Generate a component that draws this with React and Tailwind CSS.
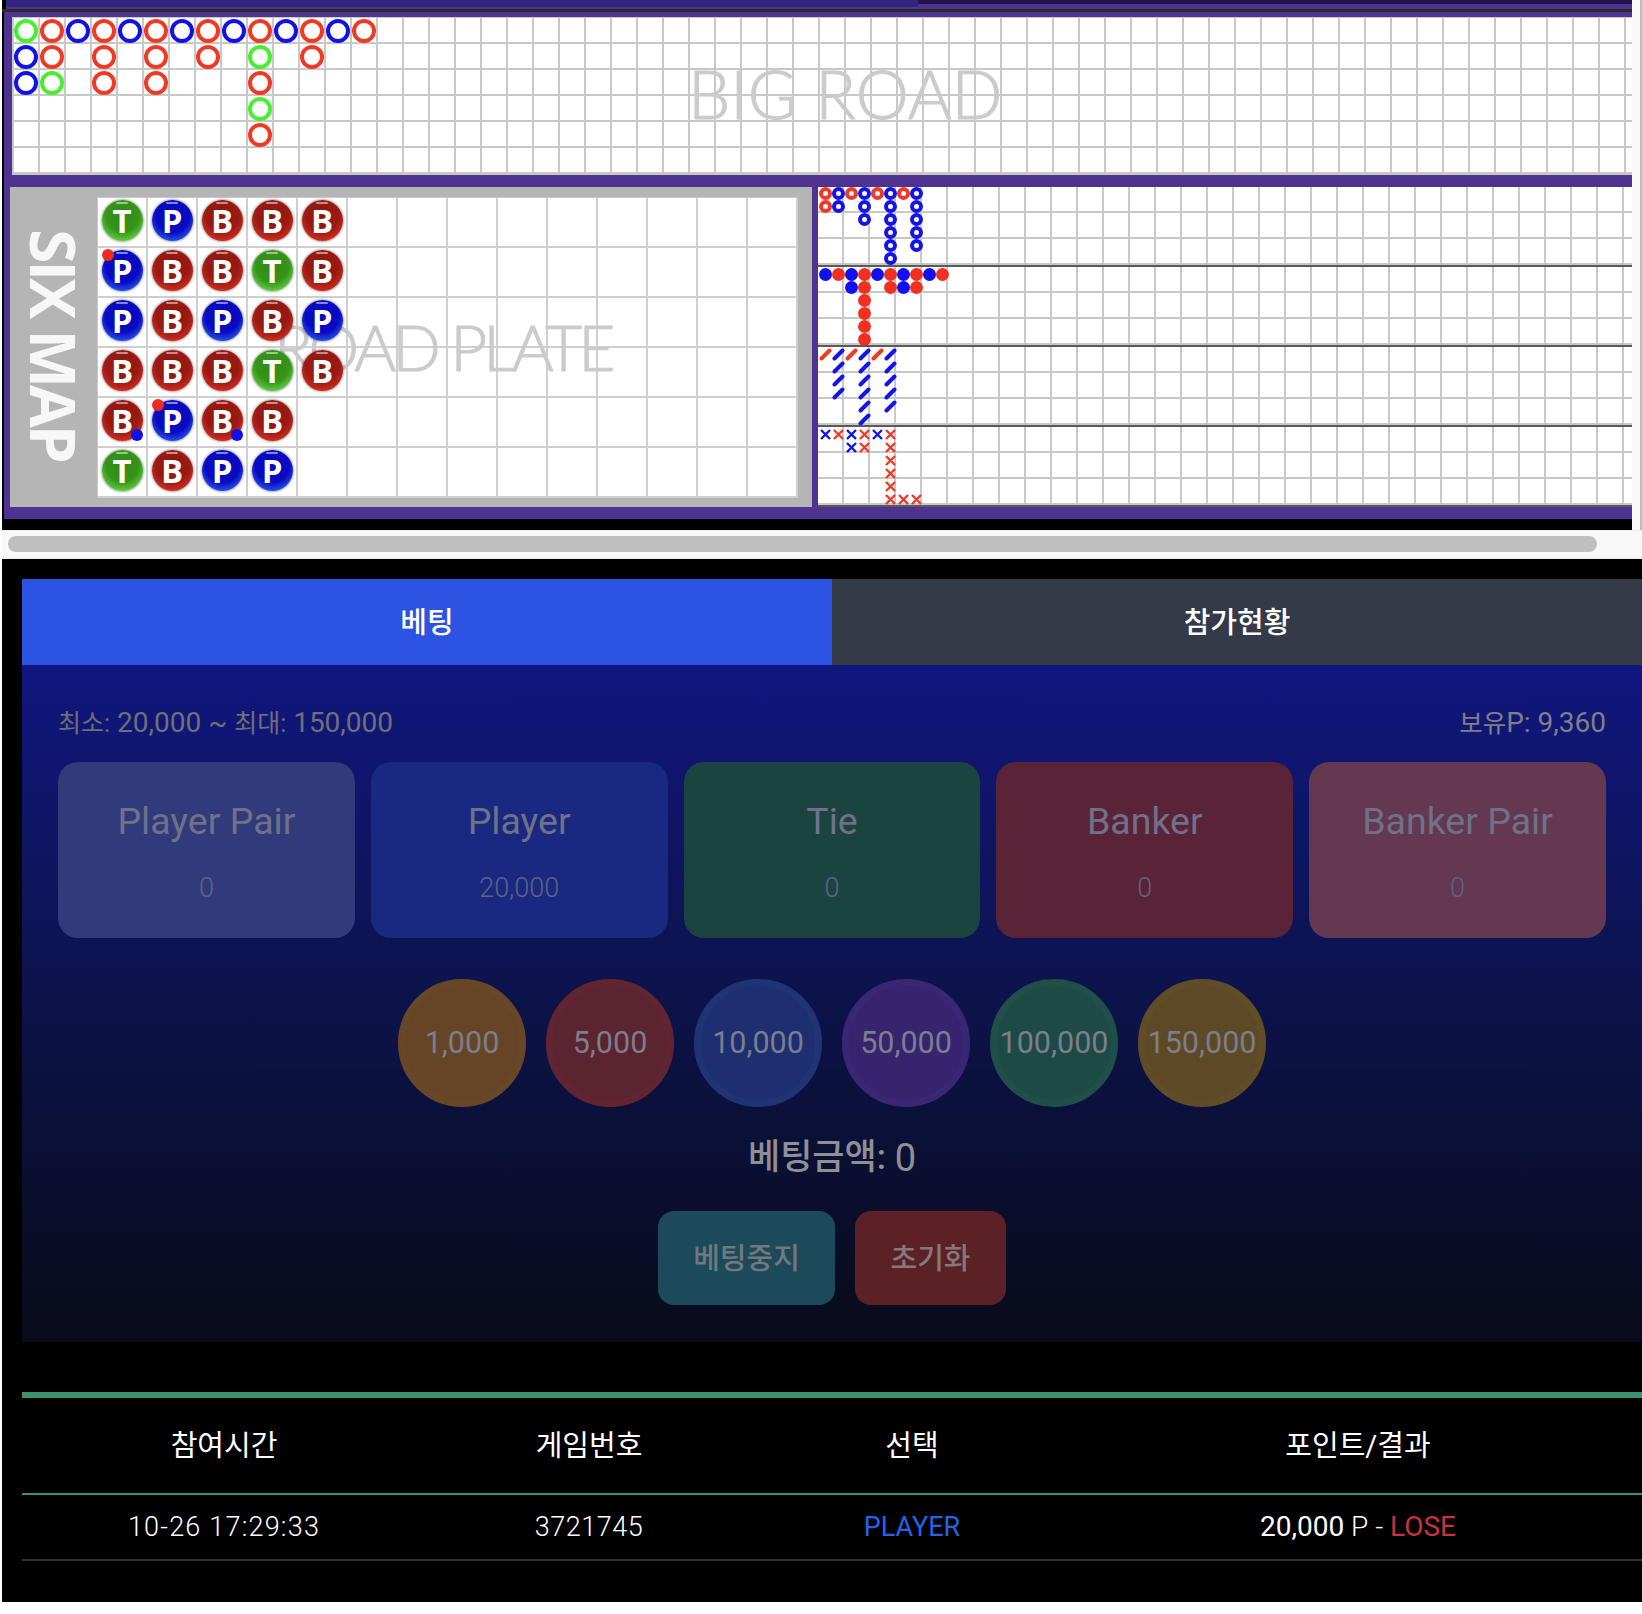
import React from "react";

const bigRoad = [
  ["g", "b", "b"],
  ["r", "r", "g"],
  ["b"],
  ["r", "r", "r"],
  ["b"],
  ["r", "r", "r"],
  ["b"],
  ["r", "r"],
  ["b"],
  ["r", "g", "r", "g", "r"],
  ["b"],
  ["r", "r"],
  ["b"],
  ["r"],
];

const beads = [
  ["T", "Pr", "P", "B", "Bb", "T"],
  ["P", "B", "B", "B", "Pr", "B"],
  ["B", "B", "P", "B", "Bb", "P"],
  ["B", "T", "B", "T", "B", "P"],
  ["B", "B", "P", "B"],
];

const bigEye = ["rr", "bb", "r", "bbb", "r", "bbbbbb", "r", "bbbbb"];
const smallRoad = ["b", "r", "bb", "rrrrrr", "b", "rr", "bb", "rr", "b", "r"];
const cockroach = ["r", "bbbb", "r", "bbbbbb", "r", "bbbbb"];
const extraRoad = ["b", "r", "bb", "rr", "b", "rrrrrr", "_____r", "_____r"];

const ringColor = {
  r: "border-[#ef3b26]",
  b: "border-[#1212e6]",
  g: "border-[#48ef30]",
};

const beadStyle = {
  P: "bg-[radial-gradient(circle_at_50%_38%,#0808b4_0%,#0a0ac4_52%,#2f6cf0_88%,#1a3cc8_100%)]",
  B: "bg-[radial-gradient(circle_at_50%_38%,#8a1610_0%,#9a1a14_50%,#e03422_88%,#a02018_100%)]",
  T: "bg-[radial-gradient(circle_at_50%_38%,#2f8a18_0%,#369418_50%,#6cde4c_88%,#3a9a22_100%)]",
};

function Bead({ code }) {
  const letter = code[0];
  return (
    <div className={`relative w-[41px] h-[41px] rounded-full flex items-center justify-center shadow-[0_0_3px_rgba(0,0,0,0.65)] ${beadStyle[letter]}`}>
      <div className="absolute top-[2px] w-[12px] h-[2px] rounded-full bg-white/50" />
      <span className="font-['Open_Sans',sans-serif] font-bold text-[33px] leading-none text-white">{letter}</span>
      {code[1] === "r" && <div className="absolute left-0 top-[-1px] w-[12px] h-[12px] rounded-full bg-[#f02a1e]" />}
      {code[1] === "b" && <div className="absolute right-0 bottom-[0px] w-[12px] h-[12px] rounded-full bg-[#1010ea]" />}
    </div>
  );
}

function Mark({ kind, color }) {
  const hex = color === "r" ? "#f03a25" : "#1414e6";
  if (kind === "ring") {
    return <div className={`w-[13px] h-[13px] rounded-full border-[4.5px] ${color === "r" ? "border-[#f03a25]" : "border-[#1414e6]"}`} />;
  }
  if (kind === "dot") {
    return <div className={`w-[13px] h-[13px] rounded-full ${color === "r" ? "bg-[#f03020]" : "bg-[#1010f0]"}`} />;
  }
  if (kind === "slash") {
    return (
      <svg width="13" height="13" viewBox="0 0 13 13">
        <path d="M2.5 10.5 L10.5 2.5" stroke={hex} strokeWidth="4" strokeLinecap="round" />
      </svg>
    );
  }
  return (
    <svg width="13" height="13" viewBox="0 0 13 13">
      <path d="M2 2 L11 11 M11 2 L2 11" stroke={hex} strokeWidth="2.4" />
    </svg>
  );
}

function SmallRoad({ data, kind }) {
  return (
    <div className="relative h-[80px] border-b-2 border-[#5a5a5a] bg-white overflow-hidden">
      <div className="grid grid-cols-[repeat(32,26px)] grid-rows-[repeat(3,26px)]">
        {Array.from({ length: 96 }).map((_, i) => (
          <div key={i} className="border-r-2 border-b-2 border-[#c8c8c8]" />
        ))}
      </div>
      <div className={`absolute left-[1px] flex ${kind === "ring" ? "top-0" : "top-[1px]"}`}>
        {data.map((col, c) => (
          <div key={c} className="flex flex-col w-[13px]">
            {col.split("").map((m, r) => (
              <div key={r} className="w-[13px] h-[13px] flex items-center justify-center">
                {m !== "_" && <Mark kind={kind} color={m} />}
              </div>
            ))}
          </div>
        ))}
      </div>
    </div>
  );
}

function BetBox({ title, amount, bg }) {
  return (
    <div className={`h-[176px] rounded-[20px] flex flex-col items-center pt-[36px] ${bg}`}>
      <div className="text-[37.5px] leading-[46px] text-[#6f7189]">{title}</div>
      <div className="mt-[24px] text-[27px] leading-[40px] font-light text-[#5e6283]">{amount}</div>
    </div>
  );
}

const boxes = [
  { title: "Player Pair", amount: "0", bg: "bg-[#313b7c]" },
  { title: "Player", amount: "20,000", bg: "bg-[#192981]" },
  { title: "Tie", amount: "0", bg: "bg-[#1b4441]" },
  { title: "Banker", amount: "0", bg: "bg-[#5b2338]" },
  { title: "Banker Pair", amount: "0", bg: "bg-[#633850]" },
];

const chips = [
  { label: "1,000", bg: "bg-[#654526]", ring: "border-[#684728]" },
  { label: "5,000", bg: "bg-[#5c2330]", ring: "border-[#612532]" },
  { label: "10,000", bg: "bg-[#1d2f70]", ring: "border-[#203375]" },
  { label: "50,000", bg: "bg-[#36246f]", ring: "border-[#392674]" },
  { label: "100,000", bg: "bg-[#1e4a46]", ring: "border-[#204e49]" },
  { label: "150,000", bg: "bg-[#5e4927]", ring: "border-[#614c28]" },
];

export default function App() {
  return (
    <div className="w-full h-[1614px] bg-white overflow-hidden pl-[2px] flex flex-col font-['Roboto','Noto_Sans_CJK_KR',sans-serif]">
      <div className="flex h-[530px] shrink-0">
        <div className="w-[1630px] bg-black flex flex-col">
          {/* top strip */}
          <div className="flex h-[9px] pl-[4px]">
            <div className="w-[912px] bg-[#35247f] border-b-2 border-[#4e3391]" />
            <div className="flex-1 bg-[#1f1450] border-b-[5px] border-[#4e3391]" />
          </div>
          <div className="h-[3px] bg-[#2a2a2a]" />

          <div className="h-[507px] ml-[2px] pl-[6px] pt-[5px] bg-[#4e3391]">
            {/* big road */}
            <div className="relative ml-[2px] h-[158px] overflow-hidden border-l-2 border-t border-b border-[#c8c8c8] bg-white">
              <div className="grid grid-cols-[repeat(63,26px)] grid-rows-[repeat(6,26px)] grid-flow-col">
                {Array.from({ length: 378 }).map((_, i) => {
                  const col = Math.floor(i / 6);
                  const value = bigRoad[col] && bigRoad[col][i % 6];
                  return (
                    <div key={i} className="border-r-2 border-b-2 border-[#c8c8c8] flex items-center justify-center">
                      {value && <div className={`w-[24px] h-[24px] translate-y-[1px] rounded-full border-[4px] ${ringColor[value]}`} />}
                    </div>
                  );
                })}
              </div>
              <div className="absolute left-[674px] top-[37px] font-['Lato',sans-serif] font-light text-[67px] leading-[76px] text-[#cbcbcb] [-webkit-text-stroke:1px_#cbcbcb] whitespace-nowrap">
                BIG ROAD
              </div>
            </div>

            <div className="flex mt-[12px] h-[320px]">
              {/* bead plate */}
              <div className="w-[802px] bg-[#b5b5b6] flex">
                <div className="w-[87px] h-[320px] flex items-center justify-center pb-[4px]">
                  <div className="rotate-90 font-['Open_Sans',sans-serif] font-bold text-[62px] tracking-[-3px] leading-none text-[#f7f7f7] whitespace-nowrap">
                    SIX MAP
                  </div>
                </div>
                <div className="relative mt-[10px] w-[701px] h-[300px] bg-white border-l border-t border-[#c8c8c8] grid grid-cols-[repeat(14,50px)] grid-rows-[repeat(6,50px)] grid-flow-col">
                  {Array.from({ length: 84 }).map((_, i) => (
                    <div key={i} className="border-r-2 border-b-2 border-[#cfcfcf]" />
                  ))}
                  <div className="absolute left-[176px] top-[111px] font-['Lato',sans-serif] font-light text-[64px] tracking-[-4px] leading-[76px] text-[#cbcbcb] [-webkit-text-stroke:1px_#cbcbcb] whitespace-nowrap">
                    ROAD PLATE
                  </div>
                  <div className="absolute left-[-1px] top-[-3px] flex">
                    {beads.map((col, c) => (
                      <div key={c} className="flex flex-col w-[50px]">
                        {col.map((code, r) => (
                          <div key={r} className="w-[50px] h-[50px] flex items-center justify-center">
                            <Bead code={code} />
                          </div>
                        ))}
                      </div>
                    ))}
                  </div>
                </div>
              </div>
              {/* derived roads */}
              <div className="ml-[6px] w-[814px] h-[320px] overflow-hidden">
                <SmallRoad data={bigEye} kind="ring" />
                <SmallRoad data={smallRoad} kind="dot" />
                <SmallRoad data={cockroach} kind="slash" />
                <SmallRoad data={extraRoad} kind="x" />
              </div>
            </div>
          </div>
        </div>
        <div className="flex-1 bg-[#f8f8f8] flex justify-end">
          <div className="w-[2px] bg-[#bdbdbd]" />
        </div>
      </div>

      {/* horizontal scrollbar */}
      <div className="h-[29px] shrink-0 bg-[#f8f8f8] border-t border-b-2 border-[#efefef] flex items-center pl-[6px]">
        <div className="w-[1589px] h-[16px] rounded-full bg-[#bfbfbf]" />
      </div>

      <div className="h-[1043px] shrink-0 bg-black pl-[20px] pt-[20px] overflow-hidden">
        {/* tabs */}
        <div className="flex h-[86px] text-[29px] font-medium text-white">
          <div className="w-[810px] pt-[4px] bg-[#2c53e2] flex items-center justify-center">베팅</div>
          <div className="w-[810px] pt-[4px] bg-[#343a48] flex items-center justify-center">참가현황</div>
        </div>

        {/* bet panel */}
        <div className="w-[1620px] h-[677px] bg-gradient-to-b from-[#11167f] to-[#090a1a] px-[36px] pt-[38px]">
          <div className="flex justify-between h-[39px] pt-[1px] items-center text-[28px] text-[#6f6f78]">
            <span>
              <span className="text-[25px]">최소:</span> 20,000 ~ <span className="text-[25px]">최대:</span> 150,000
            </span>
            <span className="text-[#7f7f85]">
              <span className="text-[25.5px]">보유</span>P: 9,360
            </span>
          </div>

          <div className="grid grid-cols-5 gap-[16px] mt-[20px]">
            {boxes.map((b) => (
              <BetBox key={b.title} {...b} />
            ))}
          </div>

          <div className="flex justify-center gap-[20px] mt-[41px]">
            {chips.map((c) => (
              <div
                key={c.label}
                className={`w-[128px] h-[128px] rounded-full border-[7px] pb-[1px] flex items-center justify-center text-[30.5px] text-[#7b7e8c] ${c.bg} ${c.ring}`}
              >
                {c.label}
              </div>
            ))}
          </div>

          <div className="mt-[27px] h-[45px] pt-[4px] flex items-center justify-center text-[35px] font-medium text-[#8f8f96] whitespace-pre">
            베팅금액: <span className="font-normal text-[38px]">0</span>
          </div>

          <div className="flex justify-center gap-[20px] mt-[32px]">
            <div className="w-[177px] h-[94px] pt-[4px] rounded-[16px] bg-[#1d4a5a] flex items-center justify-center text-[29px] font-medium text-[#72787f]">
              베팅중지
            </div>
            <div className="w-[151px] h-[94px] pt-[4px] rounded-[16px] bg-[#5c2125] flex items-center justify-center text-[29px] font-medium text-[#85777a]">
              초기화
            </div>
          </div>
        </div>

        {/* history */}
        <table className="mt-[50px] w-[1622px] table-fixed border-t-[6px] border-[#3b9270] text-white">
          <colgroup>
            <col className="w-[404px]" />
            <col className="w-[326px]" />
            <col className="w-[320px]" />
            <col className="w-[572px]" />
          </colgroup>
          <thead>
            <tr className="h-[99px] border-b-2 border-[#3b9270] text-[29px]">
              <th className="font-normal pt-[2px]">참여시간</th>
              <th className="font-normal pt-[2px]">게임번호</th>
              <th className="font-normal pt-[2px]">선택</th>
              <th className="font-normal pt-[2px]">포인트/결과</th>
            </tr>
          </thead>
          <tbody>
            <tr className="h-[66px] border-b-2 border-[#333333] text-[27px]">
              <td className="text-center tracking-[1.2px] font-light">10-26 17:29:33</td>
              <td className="text-center tracking-[0.5px] font-light">3721745</td>
              <td className="text-center text-[#2563eb]">PLAYER</td>
              <td className="text-center text-[28px]">
                <span>20,000</span> <span className="font-light">P - </span><span className="text-[#c8333c]">LOSE</span>
              </td>
            </tr>
          </tbody>
        </table>
      </div>
    </div>
  );
}
